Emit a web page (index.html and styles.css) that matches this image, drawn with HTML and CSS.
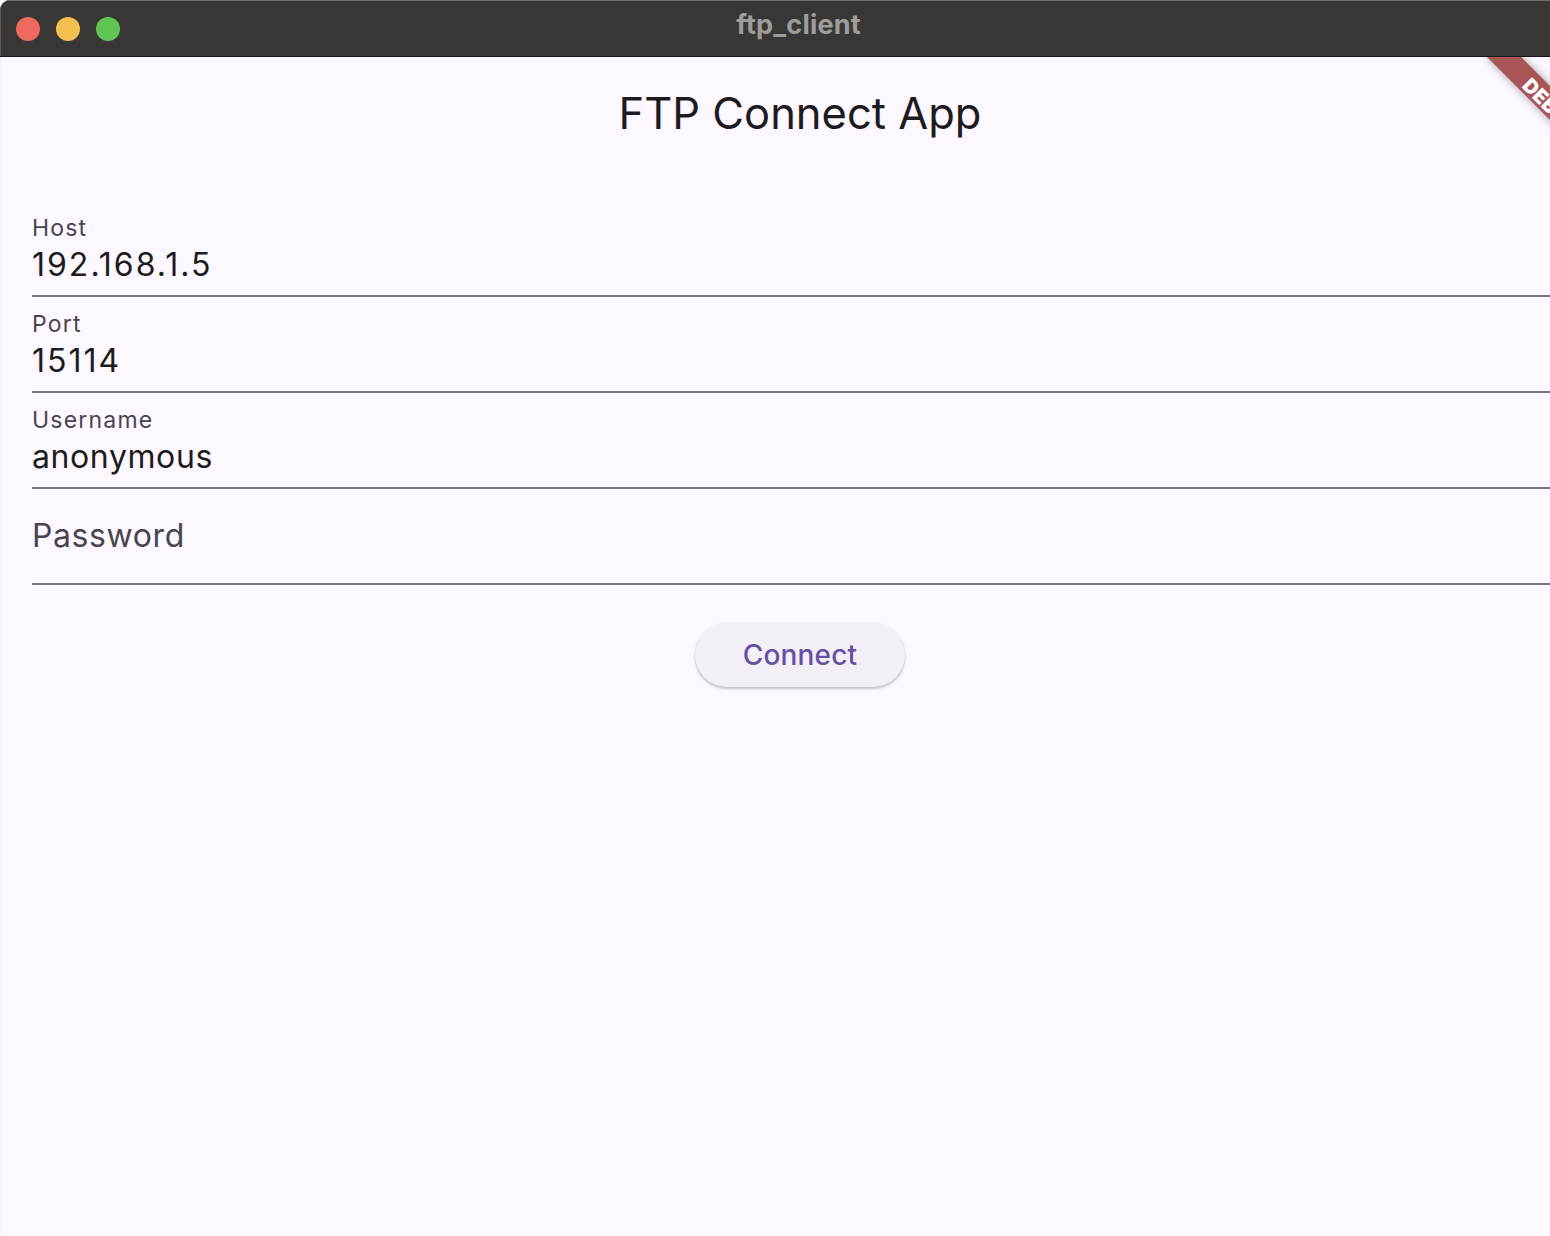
FILE: index.html
```html
<!DOCTYPE html>
<html lang="en">
<head>
<meta charset="utf-8">
<title>ftp_client</title>
<link rel="stylesheet" href="styles.css">
</head>
<body>
<div class="window">
  <header class="titlebar">
    <div class="lights">
      <span class="light red"></span>
      <span class="light yellow"></span>
      <span class="light green"></span>
    </div>
    <div class="wintitle">ftp_client</div>
    <div></div>
  </header>
  <main class="content">
    <div class="appbar">FTP Connect App</div>
    <div class="form">
      <div class="field">
        <div class="label">Host</div>
        <div class="value num">192.168.1.5</div>
      </div>
      <div class="field">
        <div class="label">Port</div>
        <div class="value num">15114</div>
      </div>
      <div class="field">
        <div class="label">Username</div>
        <div class="value">anonymous</div>
      </div>
      <div class="field empty">
        <div class="placeholder">Password</div>
      </div>
      <div class="actions">
        <button class="btn">Connect</button>
      </div>
    </div>
    <div class="banner">DEBUG</div>
  </main>
</div>
</body>
</html>
```
FILE: styles.css
```css
html, body {
  margin: 0;
  padding: 0;
}
body {
  background: #ffffff;
  width: 1550px;
  height: 1236px;
  overflow: hidden;
  font-family: Inter, "Noto Sans", "Liberation Sans", sans-serif;
}
.window {
  width: 1600px;
  height: 1236px;
  border-radius: 10px 10px 0 0;
  overflow: hidden;
  display: flex;
  flex-direction: column;
  background: #fdf7ff;
}
.titlebar {
  height: 56px;
  flex: 0 0 56px;
  background: #383735;
  border-bottom: 1px solid #151515;
  box-shadow: inset 0 1px 0 #6f6e6d, inset 1px 0 0 #5a5958;
  display: grid;
  grid-template-columns: 1fr auto 1fr;
  align-items: center;
}
.lights {
  display: flex;
  gap: 16px;
  padding-left: 16px;
  padding-top: 2px;
}
.light {
  width: 24px;
  height: 24px;
  border-radius: 50%;
  display: block;
}
.red { background: #ee6a5f; }
.yellow { background: #f5bf4f; }
.green { background: #61c554; }
.wintitle {
  color: #9e9d9c;
  font-size: 27px;
  font-weight: 700;
  margin-top: -8px;
  margin-right: 3px;
  letter-spacing: 0.2px;
}
.content {
  flex: 1;
  position: relative;
  overflow: hidden;
  box-shadow: inset 1px 0 0 #f3eef5;
}
.appbar {
  height: 112px;
  display: flex;
  align-items: center;
  justify-content: center;
  font-size: 43.5px;
  color: #1d1b20;
  letter-spacing: 0;
}
.form {
  padding: 32px 32px 0 32px;
}
.field {
  box-sizing: border-box;
  height: 96px;
  border-bottom: 2px solid #79747e;
  padding-top: 16px;
}
.label {
  font-size: 23px;
  line-height: 22px;
  color: #49454f;
  letter-spacing: 1.2px;
  margin-bottom: 10px;
}
.value {
  font-size: 32px;
  line-height: 32px;
  color: #1d1b20;
  letter-spacing: 0.6px;
}
.value.num {
  letter-spacing: 2px;
}
.field.empty {
  padding-top: 31px;
}
.placeholder {
  font-size: 32px;
  line-height: 32px;
  color: #49454f;
  letter-spacing: 0.6px;
}
.actions {
  display: flex;
  justify-content: center;
  padding-top: 38px;
}
.btn {
  height: 64px;
  padding: 0 48px;
  border: none;
  border-radius: 32px;
  background: #f4eff7;
  color: #6750a4;
  font-family: Inter, "Noto Sans", sans-serif;
  font-size: 28px;
  font-weight: 500;
  letter-spacing: 0.2px;
  box-shadow: 0 2px 3px rgba(0, 0, 0, 0.22), 0 0 2px rgba(0, 0, 0, 0.08);
}
.banner {
  position: absolute;
  left: 1472px;
  top: 36px;
  width: 160px;
  height: 24px;
  box-sizing: border-box;
  padding-top: 4px;
  transform: rotate(45deg);
  background: #a85557;
  color: #ffffff;
  font-size: 20px;
  line-height: 20px;
  font-weight: 900;
  text-align: center;
  box-shadow: 0 0 10px rgba(0, 0, 0, 0.35);
}
```
